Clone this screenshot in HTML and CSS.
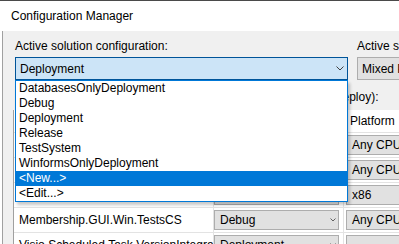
FILE: index.html
```html
<!DOCTYPE html>
<html lang="en">
<head>
  <meta charset="UTF-8" />
  <title>Configuration Manager</title>
  <link rel="stylesheet" href="styles.css">
</head>
<body>
  <div class="window">
    <div class="titlebar">Configuration Manager</div>

    <div class="content">
      <div class="top-row">
        <!-- Active configuration, opened -->
        <div class="field field-config">
          <label>Active solution configuration:</label>
          <div class="combo dropped">
            <span>Deployment</span>
            <svg class="chevron" width="8" height="5" viewBox="0 0 8 5"><path d="M0.5 0.5 L4 4 L7.5 0.5" fill="none" stroke="#404040" /></svg>
          </div>
          <ul class="dropdown">
            <li>DatabasesOnlyDeployment</li>
            <li>Debug</li>
            <li>Deployment</li>
            <li>Release</li>
            <li>TestSystem</li>
            <li>WinformsOnlyDeployment</li>
            <li class="selected">&lt;New...&gt;</li>
            <li>&lt;Edit...&gt;</li>
          </ul>
        </div>

        <div class="field field-platform">
          <label>Active solution platform:</label>
          <div class="combo">
            <span>Mixed Platforms</span>
          </div>
        </div>
      </div>

      <div class="contexts">Project contexts (check the project configurations to build or deploy):</div>

      <div class="grid">
        <div class="row header">
          <div class="cell name">Project</div>
          <div class="cell">Configuration</div>
          <div class="cell plat">Platform</div>
          <div class="cell">Build</div>
          <div class="cell">Deploy</div>
        </div>
        <div class="row">
          <div class="cell name">Membership.Core</div>
          <div class="cell conf"><div class="combo"><span>Debug</span><svg class="chev-sm" width="6" height="4" viewBox="0 0 6 4"><path d="M0.5 0.5 L3 3 L5.5 0.5" fill="none" stroke="#606060" /></svg></div></div>
          <div class="cell plat"><div class="combo"><span>Any CPU</span></div></div>
          <div class="cell"></div>
          <div class="cell"></div>
        </div>
        <div class="row">
          <div class="cell name">Membership.Data</div>
          <div class="cell conf"><div class="combo"><span>Debug</span><svg class="chev-sm" width="6" height="4" viewBox="0 0 6 4"><path d="M0.5 0.5 L3 3 L5.5 0.5" fill="none" stroke="#606060" /></svg></div></div>
          <div class="cell plat"><div class="combo"><span>Any CPU</span></div></div>
          <div class="cell"></div>
          <div class="cell"></div>
        </div>
        <div class="row">
          <div class="cell name">Membership.Setup.Deploy</div>
          <div class="cell conf"><div class="combo"><span>Deployment</span><svg class="chev-sm" width="6" height="4" viewBox="0 0 6 4"><path d="M0.5 0.5 L3 3 L5.5 0.5" fill="none" stroke="#606060" /></svg></div></div>
          <div class="cell plat"><div class="combo"><span>x86</span></div></div>
          <div class="cell"></div>
          <div class="cell"></div>
        </div>
        <div class="row">
          <div class="cell name">Membership.GUI.Win.TestsCS</div>
          <div class="cell conf"><div class="combo"><span>Debug</span><svg class="chev-sm" width="6" height="4" viewBox="0 0 6 4"><path d="M0.5 0.5 L3 3 L5.5 0.5" fill="none" stroke="#606060" /></svg></div></div>
          <div class="cell plat"><div class="combo"><span>Any CPU</span></div></div>
          <div class="cell"></div>
          <div class="cell"></div>
        </div>
        <div class="row">
          <div class="cell name">Visio.Scheduled.Task.VersionIntegration</div>
          <div class="cell conf"><div class="combo"><span>Deployment</span><svg class="chev-sm" width="6" height="4" viewBox="0 0 6 4"><path d="M0.5 0.5 L3 3 L5.5 0.5" fill="none" stroke="#606060" /></svg></div></div>
          <div class="cell plat"><div class="combo"><span></span></div></div>
          <div class="cell"></div>
          <div class="cell"></div>
        </div>
      </div>
    </div>
  </div>
</body>
</html>
```

FILE: styles.css
```css
* {
  box-sizing: border-box;
}
body {
  margin: 0;
  font-family: "Segoe UI", "Liberation Sans", Arial, sans-serif;
  font-size: 12px;
  color: #000;
  background: #fff;
  overflow: hidden;
}
.window {
  width: 399px;
  height: 244px;
  display: flex;
  flex-direction: column;
  overflow: hidden;
}
.titlebar {
  height: 31px;
  flex-shrink: 0;
  border-top: 1px solid #4a4a4a;
  padding-left: 11px;
  display: flex;
  align-items: center;
  background: #fff;
}
.content {
  flex: 1;
  margin-left: 2px;
  border-left: 1px solid #a0a0a0;
  background: #f0f0f0;
  padding: 8px 0 0 12px;
  min-width: 0;
}
.top-row {
  display: flex;
  gap: 9px;
}
.field {
  position: relative;
  flex-shrink: 0;
}
.field-config {
  width: 333px;
}
.field-platform {
  width: 160px;
}
.field label {
  display: block;
  line-height: 15px;
  white-space: nowrap;
}
.combo {
  margin-top: 3px;
  height: 23px;
  border: 1px solid #adadad;
  background: #e1e1e1;
  display: flex;
  align-items: center;
  justify-content: space-between;
  padding: 0 3px 0 4px;
  white-space: nowrap;
  overflow: hidden;
}
.combo.dropped {
  background: #cce4f7;
  border-color: #005499;
}
.chevron {
  flex-shrink: 0;
}
/* open list of the configuration box */
.dropdown {
  position: absolute;
  left: 0;
  top: 41px;
  width: 333px;
  margin: 0;
  padding: 0;
  list-style: none;
  background: #fff;
  border: 1px solid #0078d7;
  box-shadow: 2px 3px 3px rgba(0, 0, 0, 0.22);
  z-index: 2;
}
.dropdown li {
  height: 15px;
  line-height: 15px;
  padding-left: 3px;
  white-space: nowrap;
}
.dropdown li.selected {
  background: #0078d7;
  color: #fff;
}
.contexts {
  margin-top: 10px;
  line-height: 15px;
  white-space: nowrap;
}
/* project grid */
.grid {
  margin: 5px 0 0 -2px;
  border-left: 1px solid #a0a0a0;
  background: #fff;
  width: 600px;
}
.row {
  display: grid;
  grid-template-columns: 200px 130px 100px 60px 60px;
  height: 25px;
  border-bottom: 1px solid #e3e3e3;
}
.row.header {
  height: 23px;
}
.cell {
  border-right: 1px solid #e3e3e3;
  display: flex;
  align-items: center;
  white-space: nowrap;
  overflow: hidden;
}
.cell.name {
  padding-left: 5px;
}
.header .cell.plat {
  padding-left: 6px;
}
.cell.conf {
  padding-right: 4px;
}
.row:not(.header) .cell.plat {
  padding-left: 2px;
}
.cell .combo {
  margin-top: 0;
  width: 100%;
  height: 20px;
  padding: 0 2px 0 5px;
}
.chev-sm {
  flex-shrink: 0;
}
```
